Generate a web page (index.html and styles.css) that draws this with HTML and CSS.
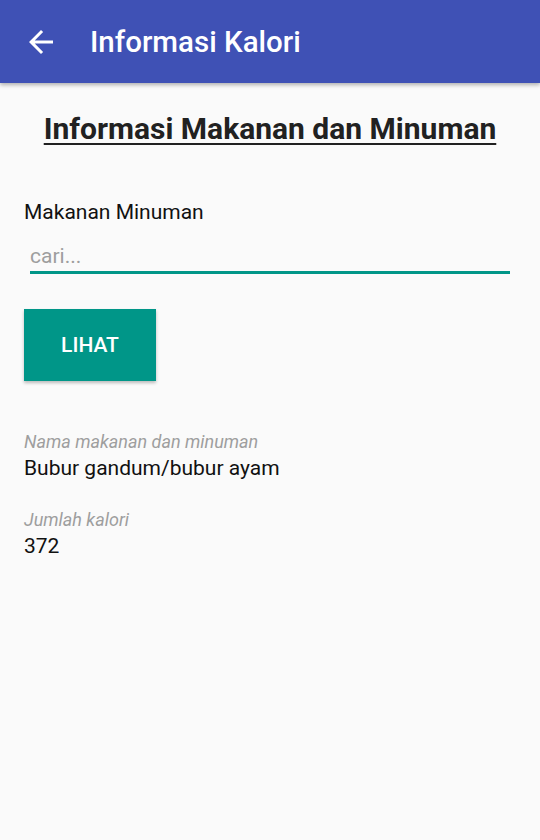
FILE: index.html
```html
<!DOCTYPE html>
<html>
<head>
<meta charset="utf-8">
<link rel="stylesheet" href="styles.css">
</head>
<body>
<header class="appbar">
  <svg class="back" width="36" height="36" viewBox="0 0 24 24"><path d="M20 11H7.83l5.59-5.59L12 4l-8 8 8 8 1.41-1.41L7.83 13H20v-2z" fill="#fff"/></svg>
  <span class="title">Informasi Kalori</span>
</header>
<main class="content">
  <h1 class="heading">Informasi Makanan dan Minuman</h1>
  <div class="label">Makanan Minuman</div>
  <div class="field"><span class="placeholder">cari...</span></div>
  <button class="btn">LIHAT</button>
  <div class="info">
    <div class="cap">Nama makanan dan minuman</div>
    <div class="val">Bubur gandum/bubur ayam</div>
  </div>
  <div class="info">
    <div class="cap">Jumlah kalori</div>
    <div class="val">372</div>
  </div>
</main>
</body>
</html>
```
FILE: styles.css
```css
html, body { margin: 0; padding: 0; }
body {
  width: 540px;
  height: 840px;
  background: #fafafa;
  font-family: Roboto, "Noto Sans", sans-serif;
  overflow: hidden;
}
.appbar {
  height: 83px;
  background: #3f51b5;
  display: flex;
  align-items: center;
  box-shadow: 0 2px 4px rgba(0,0,0,0.3);
  position: relative;
}
.back { margin-left: 23px; width: 36px; height: 36px; }
.title {
  color: #fff;
  font-size: 29.5px;
  font-weight: 500;
  margin-left: 31px;
}
.content { padding: 0 24px; }
.heading {
  margin: 26px 0 0;
  text-align: center;
  font-size: 30px;
  font-weight: 700;
  color: #212121;
  text-decoration: underline;
  text-underline-offset: 4px;
  text-decoration-thickness: 2px;
  line-height: 40px;
}
.label {
  margin-top: 49px;
  font-size: 21px;
  color: #111;
  line-height: 28px;
}
.field {
  margin: 11px 6px 0;
  border-bottom: 3px solid #009688;
  height: 28px;
  padding-top: 6px;
}
.placeholder { font-size: 21px; color: #9e9e9e; line-height: 26px; }
.btn {
  display: block;
  margin-top: 35px;
  width: 132px;
  height: 72px;
  border: none;
  background: #009688;
  color: #fff;
  font-family: Roboto, sans-serif;
  font-size: 21px;
  font-weight: 500;
  box-shadow: 0 2px 3px rgba(0,0,0,0.25);
  padding: 0;
}
.info { margin-top: 48px; }
.info + .info { margin-top: 24px; }
.cap { font-size: 18px; font-style: italic; color: #9e9e9e; line-height: 25px; }
.val { font-size: 21px; color: #111; line-height: 29px; }
```
